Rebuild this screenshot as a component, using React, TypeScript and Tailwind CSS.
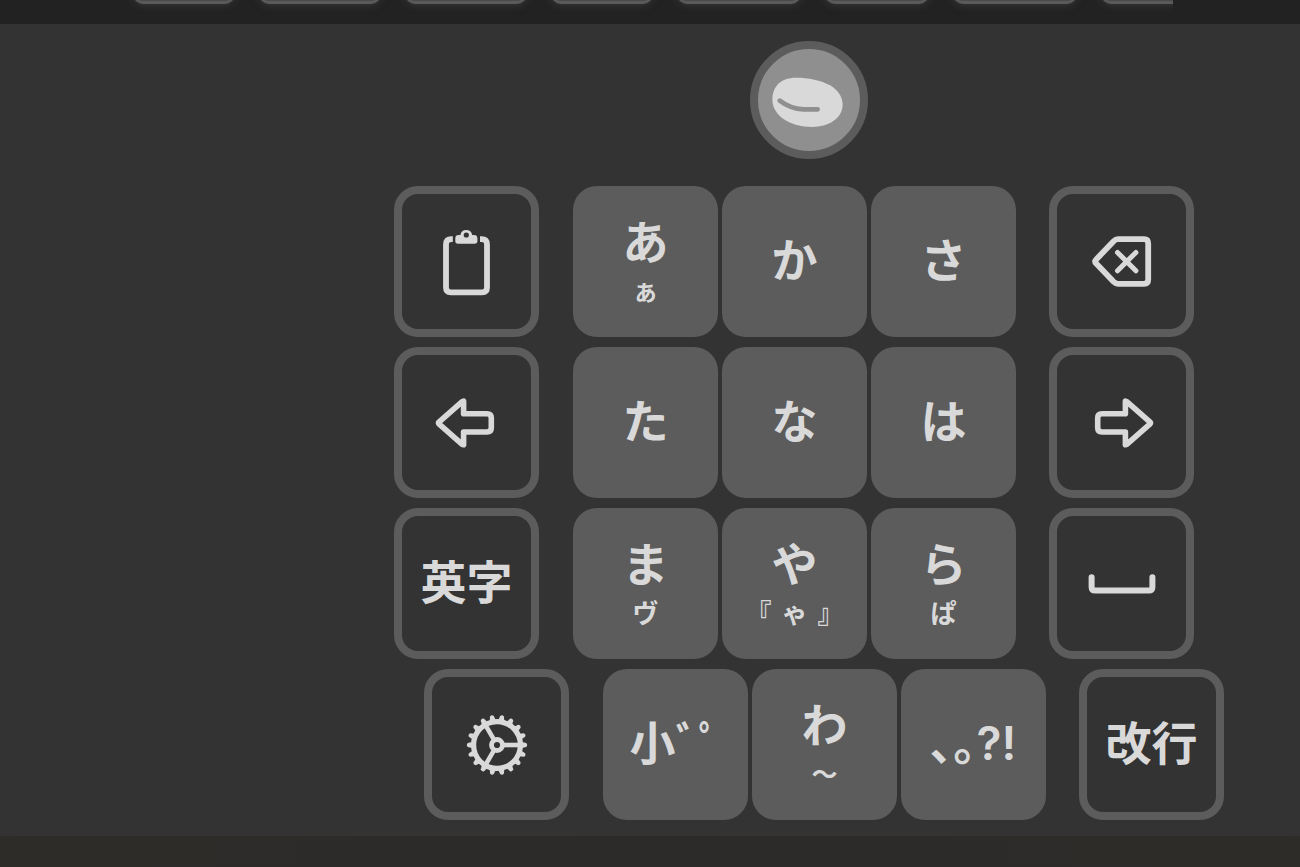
import type { ReactNode } from "react";
import clsx from "clsx";

const CANDIDATES = [
  "w-[104px]",
  "w-[124px]",
  "w-[124px]",
  "w-[104px]",
  "w-[126px]",
  "w-[106px]",
  "w-[126px]",
  "w-[126px]",
];

const TEETH = Array.from({ length: 18 }, (_, i) => i * 20);

function ClipboardIcon() {
  return (
    <svg width="48" height="68" viewBox="0 0 48 68" fill="none" aria-hidden="true">
      <path
        d="M9.8 11.2 H8.5 Q3 11.2 3 16.5 V59.5 Q3 64.3 7.8 64.3 H39.2 Q44 64.3 44 59.5 V16.5 Q44 11.2 38.5 11.2 H37"
        stroke="currentColor"
        strokeWidth="5.8"
      />
      <path
        fillRule="evenodd"
        fill="currentColor"
        d="M17.4 7 A6 6 0 0 1 29.2 7 H31 Q34.4 7 34.4 10.4 V13 Q34.4 15.7 31.7 15.7 H15 Q12.3 15.7 12.3 13 V10.4 Q12.3 7 15.6 7 Z M23.3 4.4 A2.6 2.6 0 1 0 23.3 9.6 A2.6 2.6 0 1 0 23.3 4.4 Z"
      />
    </svg>
  );
}

function DeleteIcon() {
  return (
    <svg width="60" height="52" viewBox="0 0 60 52" fill="none" stroke="currentColor" aria-hidden="true">
      <path
        d="M26 3.2 H52 Q56.2 3.2 56.2 7.4 V43.6 Q56.2 47.8 52 47.8 H26 Q23.6 47.8 21.6 45.8 L4.2 27.6 Q2.2 25.5 4.2 23.4 L21.6 5.2 Q23.6 3.2 26 3.2 Z"
        strokeWidth="5.8"
      />
      <path d="M25.5 16.4 L43.9 34.8 M43.9 16.4 L25.5 34.8" strokeWidth="5" strokeLinecap="round" />
    </svg>
  );
}

function ArrowIcon({ flip = false }: { flip?: boolean }) {
  return (
    <svg
      width="64"
      height="50"
      viewBox="0 0 64 50"
      fill="none"
      stroke="currentColor"
      className={clsx(flip && "-scale-x-100")}
      aria-hidden="true"
    >
      <path
        d="M28.6 3.2 V15.8 H52 Q56.3 15.8 56.3 20 V29.8 Q56.3 34 52 34 H28.6 V46.8 L27.2 46.4 L4.2 26.2 Q3 25 4.2 23.8 L27.2 3.6 Z"
        strokeWidth="5.6"
        strokeLinejoin="round"
      />
    </svg>
  );
}

function SpaceIcon() {
  return (
    <svg width="68" height="20" viewBox="0 0 68 20" fill="none" aria-hidden="true">
      <path
        d="M3.6 3.2 V13 Q3.6 16.6 7.2 16.6 H60.8 Q64.4 16.6 64.4 13 V3.2"
        stroke="currentColor"
        strokeWidth="6"
        strokeLinecap="round"
      />
    </svg>
  );
}

function GearIcon() {
  return (
    <svg width="62" height="62" viewBox="-31 -31 62 62" fill="none" stroke="currentColor" aria-hidden="true">
      <circle r="23.4" strokeWidth="5.2" />
      <circle r="5.5" strokeWidth="4.8" />
      {[0, 120, 240].map((a) => (
        <path key={a} d="M7 0 H23" strokeWidth="4.6" transform={`rotate(${a})`} />
      ))}
      {TEETH.map((a) => (
        <path
          key={a}
          d="M25 -3 L29.2 -1.9 Q31.2 0 29.2 1.9 L25 3 Z"
          fill="currentColor"
          stroke="none"
          transform={`rotate(${a})`}
        />
      ))}
    </svg>
  );
}

function BeanIcon() {
  return (
    <svg viewBox="56 57 306 306" fill="none" className="size-full" aria-hidden="true">
      <path
        d="M170 143 C206 143 246 151 272 166 C298 182 310 202 310 226 C308 266 268 291 218 291 C152 291 99 258 99 208 C99 168 126 143 170 143 Z"
        fill="#d9d9d9"
      />
      <path d="M121 212 C142 228 164 237 192 238 H235" stroke="#8f8f8f" strokeWidth="14" strokeLinecap="round" />
    </svg>
  );
}

type KeyProps = {
  label: string;
  sub?: ReactNode;
  outlined?: boolean;
  children?: ReactNode;
};

function Key({ label, sub, outlined = false, children }: KeyProps) {
  return (
    <button
      type="button"
      aria-label={label}
      className={clsx(
        "flex h-[151px] w-[145px] shrink-0 flex-col items-center justify-center whitespace-nowrap rounded-3xl",
        outlined ? "border-8 border-[#5c5c5c]" : "bg-[#5c5c5c]",
        !children && "pb-[3px]",
      )}
    >
      {children ?? <span className="text-[46px] leading-[64px]">{label}</span>}
      {sub && <span className="flex gap-2.5 text-[26px] leading-9">{sub}</span>}
    </button>
  );
}

function Row({ left, right, shifted = false, children }: { left: ReactNode; right: ReactNode; shifted?: boolean; children: ReactNode }) {
  return (
    <div className={clsx("flex", shifted ? "pl-[30px]" : "pr-[30px]")}>
      {left}
      <div className="ml-[34px] mr-[33px] flex gap-1">{children}</div>
      {right}
    </div>
  );
}

export default function App() {
  return (
    <div className="flex min-h-screen flex-col overflow-hidden bg-[#333333] font-['Inter','Noto_Sans_CJK_JP',sans-serif] font-semibold text-[#d9d9d9]">
      {/* 変換候補バー */}
      <header className="h-6 bg-[#222222] px-[127px]">
        <div className="flex h-full items-start gap-[22px] overflow-hidden pl-[5px]">
          {CANDIDATES.map((width, i) => (
            <button
              key={i}
              type="button"
              aria-label={`候補 ${i + 1}`}
              className={clsx(
                "-mt-10 h-11 shrink-0 rounded-xl border-b-3 border-[#5a5a5a] bg-[#4a4a4a] shadow-[0_1px_8px_#383838]",
                width,
              )}
            />
          ))}
        </div>
      </header>

      <main className="flex flex-1 justify-end pb-4 pr-[76px] pt-[17px]">
        <div className="flex flex-col items-center">
          <button
            type="button"
            aria-label="メニュー"
            className="mb-[27px] size-[118px] rounded-full border-8 border-[#5c5c5c] bg-[#8f8f8f]"
          >
            <BeanIcon />
          </button>

          <div className="flex flex-col gap-2.5">
            <Row
              left={<Key label="クリップボード" outlined><ClipboardIcon /></Key>}
              right={<Key label="削除" outlined><DeleteIcon /></Key>}
            >
              <Key label="あ" sub="ぁ" />
              <Key label="か" />
              <Key label="さ" />
            </Row>
            <Row
              left={<Key label="左へ" outlined><ArrowIcon /></Key>}
              right={<Key label="右へ" outlined><ArrowIcon flip /></Key>}
            >
              <Key label="た" />
              <Key label="な" />
              <Key label="は" />
            </Row>
            <Row
              left={<Key label="英字" outlined />}
              right={<Key label="空白" outlined><SpaceIcon /></Key>}
            >
              <Key label="ま" sub="ヴ" />
              <Key label="や" sub={<><span>『</span><span>ゃ</span><span>』</span></>} />
              <Key label="ら" sub="ぱ" />
            </Row>
            <Row
              shifted
              left={<Key label="設定" outlined><GearIcon /></Key>}
              right={<Key label="改行" outlined />}
            >
              <Key label="小ﾞﾟ" />
              <Key label="わ" sub="〜" />
              <Key label="､｡?!" />
            </Row>
          </div>
        </div>
      </main>

      <footer className="h-[31px] bg-linear-to-r from-[#2e2c29] via-[#2c2b2a] to-[#2d2c29]" />
    </div>
  );
}
